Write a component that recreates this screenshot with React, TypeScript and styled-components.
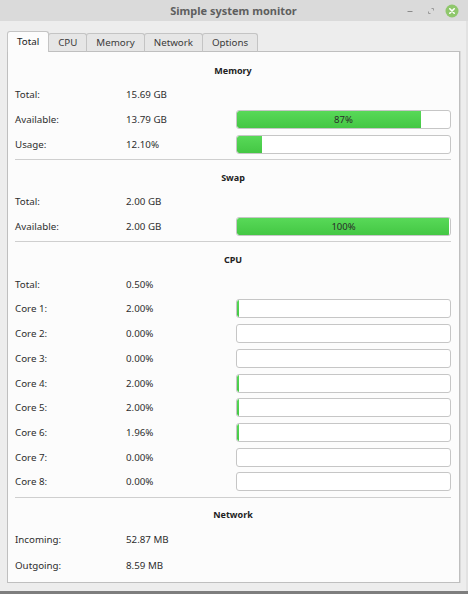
import React from "react";
import styled, { createGlobalStyle } from "styled-components";

const Global = createGlobalStyle`
  html, body { margin: 0; padding: 0; }
  body {
    background: #ededed;
    font-family: "Noto Sans", "DejaVu Sans", sans-serif;
    color: #2e2e2e;
    overflow: hidden;
  }
  #root { width: 468px; height: 594px; }
`;

const Window = styled.div`
  width: 468px;
  height: 594px;
  box-sizing: border-box;
  display: flex;
  flex-direction: column;
  background: #ededed;
  border-bottom: 3px solid #7e7e7e;
  box-shadow: inset -2px 0 0 #e2e2e2;
`;

const TitleBar = styled.div`
  height: 21px;
  flex: 0 0 21px;
  background: #dadada;
  display: grid;
  grid-template-columns: 1fr auto 1fr;
  align-items: center;
`;

const Title = styled.div`
  grid-column: 2;
  font-size: 11px;
  font-weight: 700;
  color: #5e5e5e;
  line-height: 21px;
  margin-left: -1px;
`;

const Controls = styled.div`
  grid-column: 3;
  display: flex;
  justify-content: flex-end;
  align-items: center;
  padding-right: 6px;
`;

const CtrlBtn = styled.div`
  width: 21px;
  height: 21px;
  display: flex;
  align-items: center;
  justify-content: center;
`;

const Body = styled.div`
  flex: 1;
  display: flex;
  flex-direction: column;
  padding: 10px 8px 8px 7px;
  min-height: 0;
`;

const TabBar = styled.div`
  display: flex;
  align-items: flex-end;
  height: 21px;
  margin-bottom: -1px;
  position: relative;
  z-index: 1;
`;

const Tab = styled.div<{ $active?: boolean }>`
  box-sizing: border-box;
  height: ${(p) => (p.$active ? "21px" : "19px")};
  padding: 0 9px;
  margin-right: -1px;
  display: flex;
  align-items: center;
  justify-content: center;
  font-size: 9.75px;
  color: ${(p) => (p.$active ? "#222" : "#3a3a3a")};
  background: ${(p) => (p.$active ? "#fcfcfc" : "#e6e6e6")};
  border: 1px solid #c4c4c4;
  border-bottom: ${(p) => (p.$active ? "none" : "1px solid #bfbfbf")};
  border-radius: 3px 3px 0 0;
  position: relative;
  z-index: ${(p) => (p.$active ? 2 : 1)};
  padding-bottom: ${(p) => (p.$active ? "1px" : "0")};
`;

const Panel = styled.div`
  flex: 1;
  box-sizing: border-box;
  background: #fcfcfc;
  border: 1px solid #bfbfbf;
  box-shadow: 1px 0 0 #dadada;
  padding: 1px 8px 0 7px;
  display: flex;
  flex-direction: column;
`;

const Header = styled.div`
  box-sizing: border-box;
  height: 29.5px;
  padding-top: 10.5px;
  line-height: 14px;
  text-align: center;
  font-size: 9px;
  font-weight: 700;
  color: #222;
`;

const Row = styled.div<{ $tall?: boolean }>`
  height: ${(p) => (p.$tall ? "25.5px" : "24.7px")};
  display: grid;
  grid-template-columns: 111px 110px 1fr;
  align-items: center;
  font-size: 9.75px;
  color: #2e2e2e;
`;

const Separator = styled.div`
  margin-top: 2.5px;
  height: 1px;
  background: #cfcfcf;
`;

const Bar = styled.div`
  position: relative;
  box-sizing: border-box;
  height: 19px;
  border: 1px solid #c6c6c6;
  border-radius: 3px;
  background: #ffffff;
  overflow: hidden;
`;

const Fill = styled.div`
  height: 100%;
  background: linear-gradient(#58d958, #44c744);
  border-radius: 2px 0 0 2px;
`;

const BarText = styled.div`
  position: absolute;
  inset: 0;
  display: flex;
  align-items: center;
  justify-content: center;
  font-size: 9.5px;
  color: #2a2a2a;
`;

type RowData = { label: string; value: string; bar?: number; text?: string };

function Progress({ pct, text }: { pct: number; text?: string }) {
  return (
    <Bar>
      <Fill style={{ width: pct > 0 ? `calc(${pct}% - 1px)` : 0 }} />
      {text && <BarText>{text}</BarText>}
    </Bar>
  );
}

function Section({ title, rows, last }: { title: string; rows: RowData[]; last?: boolean }) {
  return (
    <>
      <Header>{title}</Header>
      {rows.map((r) => (
        <Row key={r.label} $tall={last}>
          <span>{r.label}</span>
          <span>{r.value}</span>
          {r.bar !== undefined ? <Progress pct={r.bar} text={r.text} /> : <span />}
        </Row>
      ))}
      {!last && <Separator />}
    </>
  );
}

const memory: RowData[] = [
  { label: "Total:", value: "15.69 GB" },
  { label: "Available:", value: "13.79 GB", bar: 87, text: "87%" },
  { label: "Usage:", value: "12.10%", bar: 12.1 },
];

const swap: RowData[] = [
  { label: "Total:", value: "2.00 GB" },
  { label: "Available:", value: "2.00 GB", bar: 100, text: "100%" },
];

const cores = ["2.00", "0.00", "0.00", "2.00", "2.00", "1.96", "0.00", "0.00"];
const cpu: RowData[] = [
  { label: "Total:", value: "0.50%" },
  ...cores.map((v, i) => ({ label: `Core ${i + 1}:`, value: `${v}%`, bar: parseFloat(v) * 0.6 })),
];

const network: RowData[] = [
  { label: "Incoming:", value: "52.87 MB" },
  { label: "Outgoing:", value: "8.59 MB" },
];

export default function App() {
  return (
    <>
      <Global />
      <Window>
        <TitleBar>
          <Title>Simple system monitor</Title>
          <Controls>
            <CtrlBtn>
              <svg width="8" height="8" viewBox="0 0 8 8">
                <rect x="1.5" y="4" width="5" height="1" fill="#8a8a8a" />
              </svg>
            </CtrlBtn>
            <CtrlBtn>
              <svg width="8" height="8" viewBox="0 0 8 8">
                <path d="M4.5 1.5 H6.5 V3.5 M3.5 6.5 H1.5 V4.5" stroke="#9a9a9a" strokeWidth="1" fill="none" />
              </svg>
            </CtrlBtn>
            <CtrlBtn>
              <svg width="14" height="14" viewBox="0 0 14 14">
                <circle cx="7" cy="7" r="6.5" fill="#8fc76c" />
                <path d="M4.8 4.8 L9.2 9.2 M9.2 4.8 L4.8 9.2" stroke="#ffffff" strokeWidth="1.6" strokeLinecap="round" />
              </svg>
            </CtrlBtn>
          </Controls>
        </TitleBar>
        <Body>
          <TabBar>
            <Tab $active>Total</Tab>
            <Tab>CPU</Tab>
            <Tab>Memory</Tab>
            <Tab>Network</Tab>
            <Tab>Options</Tab>
          </TabBar>
          <Panel>
            <Section title="Memory" rows={memory} />
            <Section title="Swap" rows={swap} />
            <Section title="CPU" rows={cpu} />
            <Section title="Network" rows={network} last />
          </Panel>
        </Body>
      </Window>
    </>
  );
}
